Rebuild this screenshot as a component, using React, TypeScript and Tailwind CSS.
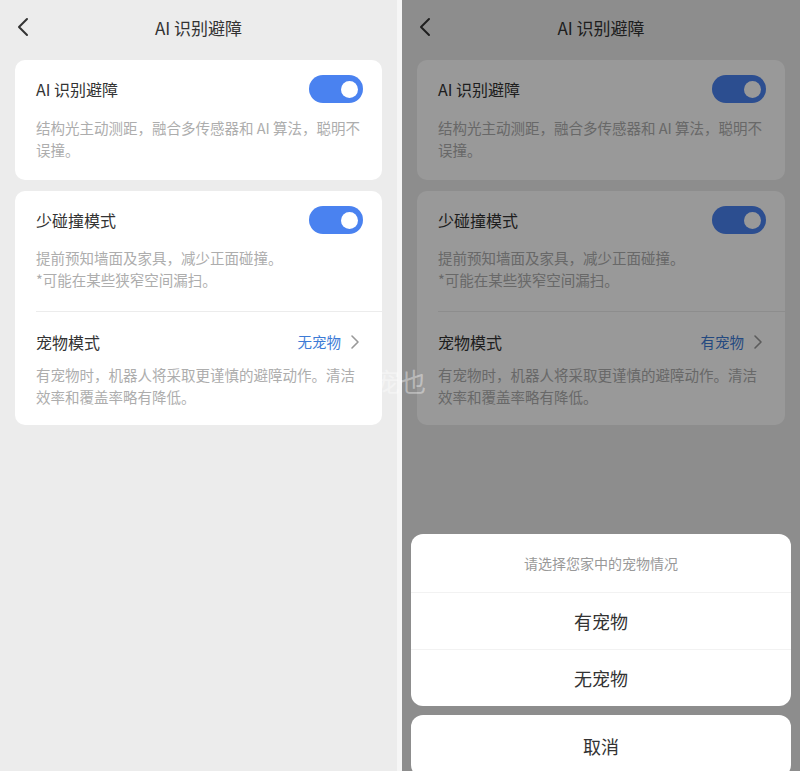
const font = { fontFamily: '"Noto Sans CJK SC", "Noto Sans", sans-serif' };

function Toggle() {
  return (
    <div className="w-[54px] h-[28px] rounded-full bg-[#4a82f0] flex items-center justify-end pr-[5px]">
      <div className="w-[17px] h-[17px] rounded-full bg-white" />
    </div>
  );
}

function BackIcon() {
  return (
    <svg width="14" height="20" viewBox="0 0 14 20" fill="none">
      <polyline points="11,2 3,10 11,18" stroke="#333" strokeWidth="2" strokeLinecap="round" strokeLinejoin="round" />
    </svg>
  );
}

function ChevronRight() {
  return (
    <svg width="10" height="16" viewBox="0 0 10 16" fill="none">
      <polyline points="2,2 8,8 2,14" stroke="#999" strokeWidth="1.6" strokeLinecap="round" strokeLinejoin="round" />
    </svg>
  );
}

function Page({ pet }: { pet: string }) {
  return (
    <div className="h-full bg-[#ececec] px-[15px]">
      <div className="relative h-[55px] flex items-center justify-center">
        <div className="absolute left-[1px] top-[17px]">
          <BackIcon />
        </div>
        <span className="text-[17px] text-[#333] leading-none">AI 识别避障</span>
      </div>

      <div className="mt-[5px] bg-white rounded-[10px] pl-[21px] pr-[19px] pt-[15px] pb-[19px]">
        <div className="h-[28px] flex items-center justify-between">
          <span className="text-[16px] text-[#333]">AI 识别避障</span>
          <Toggle />
        </div>
        <p className="mt-[14px] text-[14.5px] leading-[22px] text-[#adadad] whitespace-nowrap">
          结构光主动测距，融合多传感器和 AI 算法，聪明不
          <br />
          误撞。
        </p>
      </div>

      <div className="mt-[11px] bg-white rounded-[10px]">
        <div className="pl-[21px] pr-[19px] pt-[15px] pb-[20px]">
          <div className="h-[28px] flex items-center justify-between">
            <span className="text-[16px] text-[#333]">少碰撞模式</span>
            <Toggle />
          </div>
          <p className="mt-[13px] text-[14.5px] leading-[22px] text-[#adadad] whitespace-nowrap">
            提前预知墙面及家具，减少正面碰撞。
            <br />
            *可能在某些狭窄空间漏扫。
          </p>
        </div>
        <div className="ml-[21px] h-px bg-[#ececec]" />
        <div className="pl-[21px] pr-[22px] pt-[18px] pb-[17px]">
          <div className="h-[24px] flex items-center justify-between">
            <span className="text-[16px] text-[#333]">宠物模式</span>
            <div className="flex items-center gap-[9px]">
              <span className="text-[14.5px] text-[#3d7bd6]">{pet}</span>
              <ChevronRight />
            </div>
          </div>
          <p className="mt-[10px] text-[14.5px] leading-[22px] text-[#adadad] whitespace-nowrap">
            有宠物时，机器人将采取更谨慎的避障动作。清洁
            <br />
            效率和覆盖率略有降低。
          </p>
        </div>
      </div>
    </div>
  );
}

export default function App() {
  return (
    <div className="relative w-[800px] h-[771px] overflow-hidden flex bg-[#f4f4f4]" style={font}>
      <div className="w-[397px] h-full">
        <Page pet="无宠物" />
      </div>
      <div className="w-[5px] h-full bg-[#f6f6f6]" />
      <div className="relative w-[398px] h-full">
        <Page pet="有宠物" />
        <div className="absolute inset-0 bg-black/40" />
        <div className="absolute top-[534px] left-[9px] right-[9px] flex flex-col gap-[9px]">
          <div className="bg-white rounded-[12px] overflow-hidden">
            <div className="h-[58px] flex items-center justify-center text-[14px] text-[#999]">
              请选择您家中的宠物情况
            </div>
            <div className="h-px bg-[#f2f2f2]" />
            <div className="h-[56px] flex items-center justify-center text-[18px] text-[#333]">有宠物</div>
            <div className="h-px bg-[#f2f2f2]" />
            <div className="h-[56px] flex items-center justify-center text-[18px] text-[#333]">无宠物</div>
          </div>
          <div className="bg-white rounded-[12px] h-[62px] flex items-center justify-center text-[18px] text-[#333]">
            取消
          </div>
        </div>
      </div>
      <div className="absolute left-[374px] top-[368px] text-[26px] leading-none text-white/40 pointer-events-none">
        宠也
      </div>
    </div>
  );
}
